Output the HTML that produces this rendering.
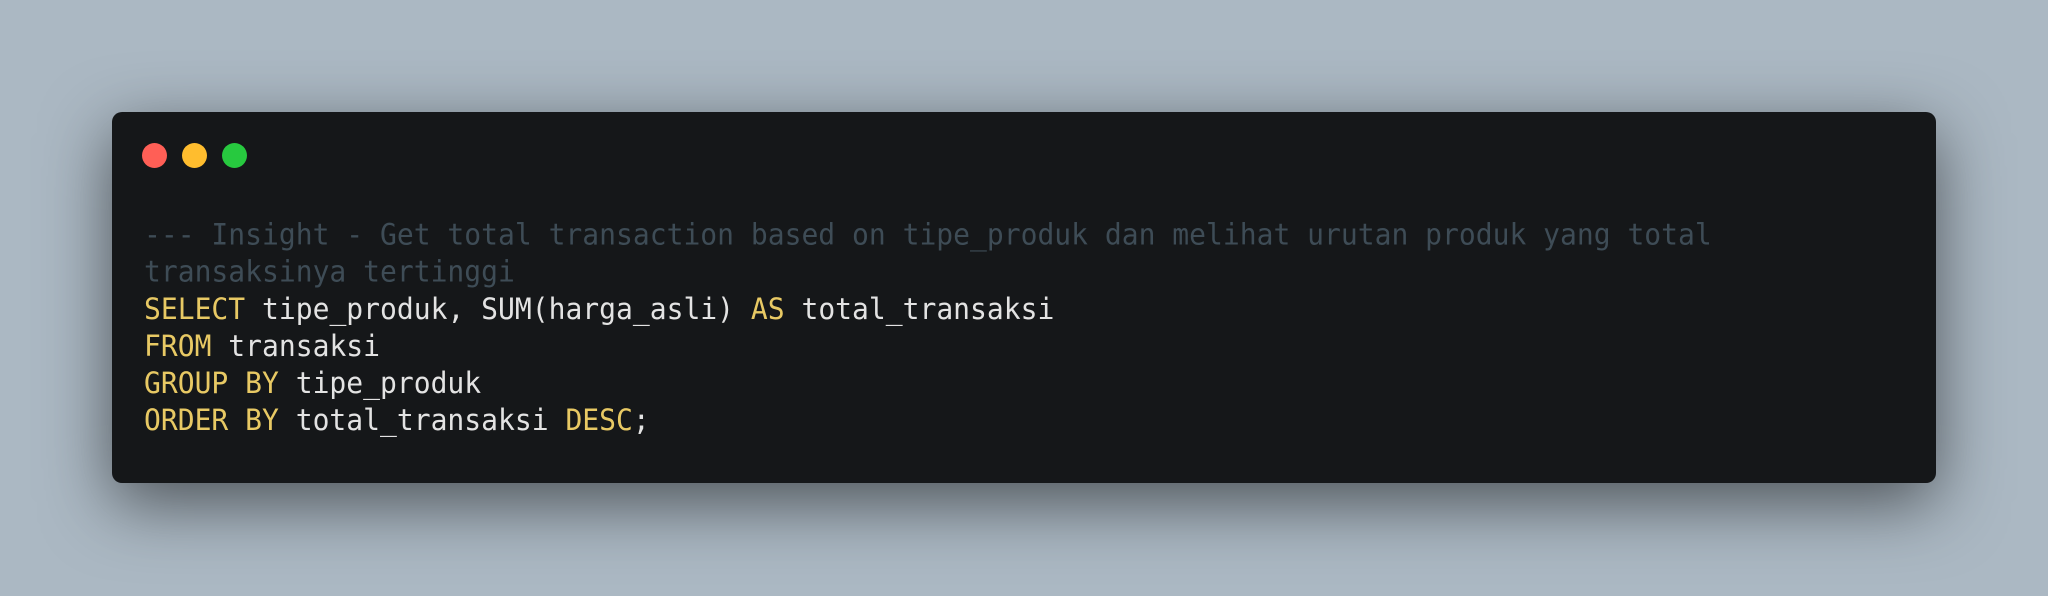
<!DOCTYPE html>
<html><head><style>
html,body{margin:0;padding:0}
body{width:2048px;height:596px;background:#abb8c3;position:relative;overflow:hidden}
.win{position:absolute;left:112px;top:112px;width:1824px;height:371px;background:#151719;border-radius:10px;box-shadow:0 20px 68px rgba(0,0,0,0.55)}
.dot{position:absolute;top:143px;width:25px;height:25px;border-radius:50%}
pre{position:absolute;left:144px;top:216px;margin:0;font-family:"DejaVu Sans Mono","Liberation Mono",monospace;font-size:28px;line-height:35px;color:#e3e3e3;white-space:pre;transform:scaleY(1.06);transform-origin:0 0}
.c{color:#3e4c56}.k{color:#e8c964}
</style></head><body>
<div class="win"></div>
<div class="dot" style="left:142px;background:#ff5f56"></div>
<div class="dot" style="left:182px;background:#ffbd2e"></div>
<div class="dot" style="left:222px;background:#27c93f"></div>
<pre><span class="c">--- Insight - Get total transaction based on tipe_produk dan melihat urutan produk yang total
transaksinya tertinggi</span>
<span class="k">SELECT</span> tipe_produk, SUM(harga_asli) <span class="k">AS</span> total_transaksi
<span class="k">FROM</span> transaksi
<span class="k">GROUP BY</span> tipe_produk
<span class="k">ORDER BY</span> total_transaksi <span class="k">DESC</span>;</pre>
</body></html>
